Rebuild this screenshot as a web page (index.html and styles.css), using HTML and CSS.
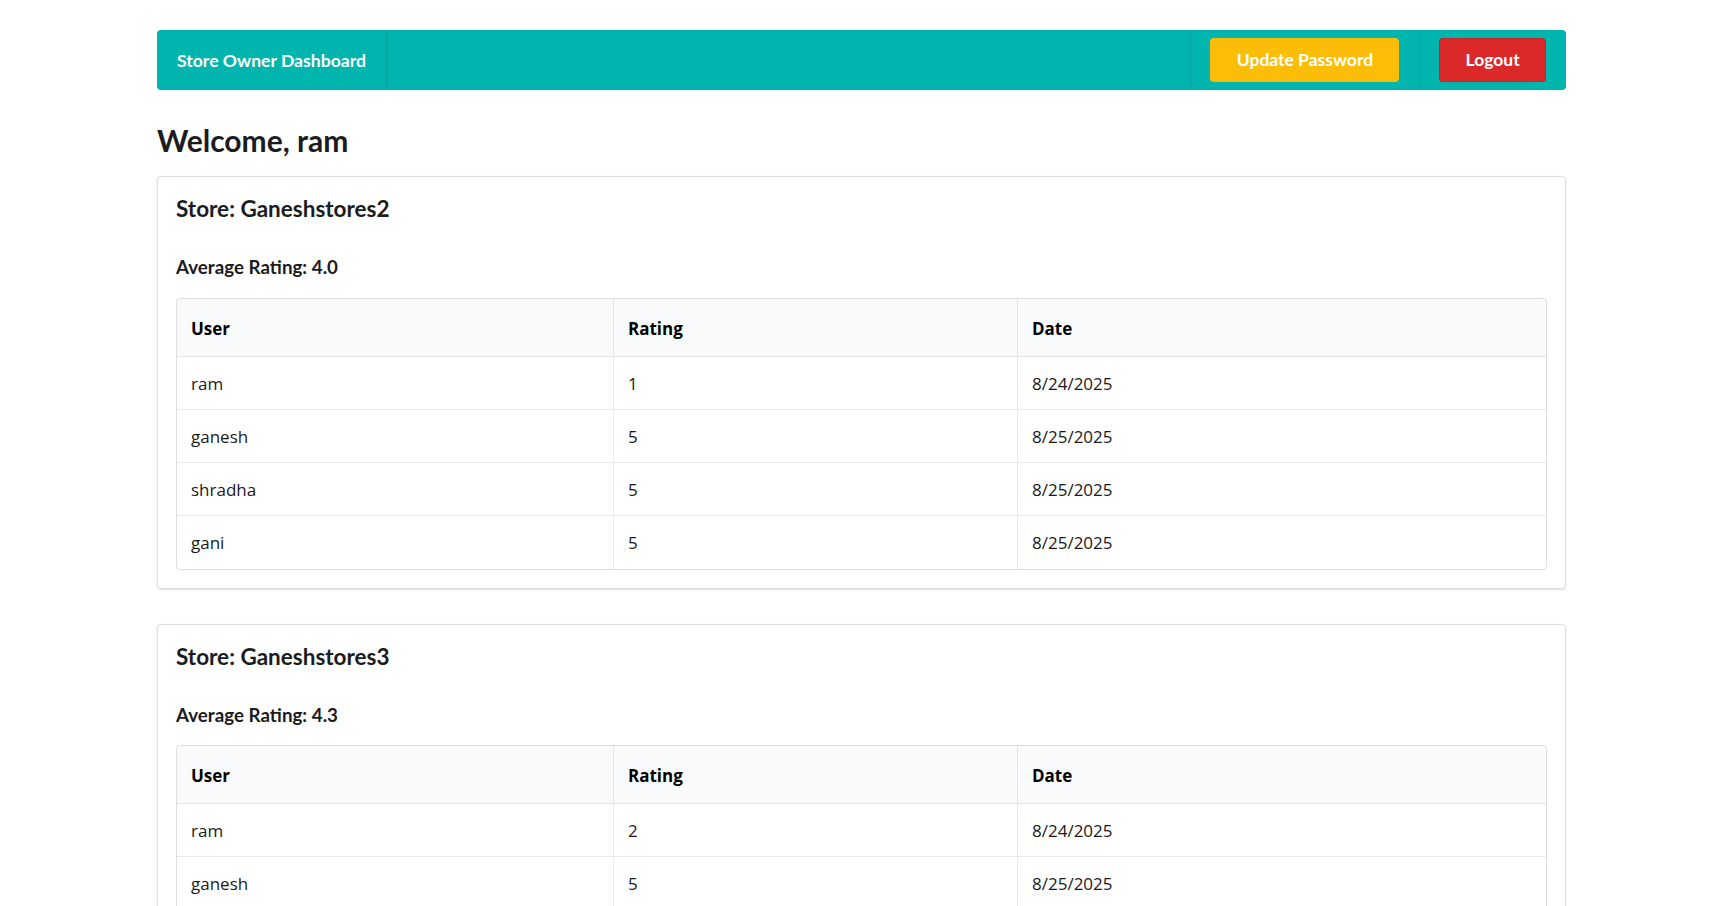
FILE: index.html
```html
<!DOCTYPE html>
<html lang="en">
<head>
<meta charset="utf-8">
<title>Store Owner Dashboard</title>
<link rel="stylesheet" href="styles.css">
</head>
<body>
<div class="page">
  <nav class="navbar">
    <div class="brand">Store Owner Dashboard</div>
    <div class="nav-right">
      <div class="nav-item"><button class="btn btn-yellow">Update Password</button></div>
      <div class="nav-item"><button class="btn btn-red">Logout</button></div>
    </div>
  </nav>

  <h1 class="welcome">Welcome, ram</h1>

  <section class="card">
    <h3 class="store-title">Store: Ganeshstores2</h3>
    <h4 class="avg">Average Rating: 4.0</h4>
    <table class="ratings">
      <colgroup><col class="c-user"><col class="c-rating"><col></colgroup>
      <thead>
        <tr><th>User</th><th>Rating</th><th>Date</th></tr>
      </thead>
      <tbody>
        <tr><td>ram</td><td>1</td><td>8/24/2025</td></tr>
        <tr><td>ganesh</td><td>5</td><td>8/25/2025</td></tr>
        <tr><td>shradha</td><td>5</td><td>8/25/2025</td></tr>
        <tr><td>gani</td><td>5</td><td>8/25/2025</td></tr>
      </tbody>
    </table>
  </section>

  <section class="card">
    <h3 class="store-title">Store: Ganeshstores3</h3>
    <h4 class="avg">Average Rating: 4.3</h4>
    <table class="ratings">
      <colgroup><col class="c-user"><col class="c-rating"><col></colgroup>
      <thead>
        <tr><th>User</th><th>Rating</th><th>Date</th></tr>
      </thead>
      <tbody>
        <tr><td>ram</td><td>2</td><td>8/24/2025</td></tr>
        <tr><td>ganesh</td><td>5</td><td>8/25/2025</td></tr>
        <tr><td>shradha</td><td>5</td><td>8/25/2025</td></tr>
      </tbody>
    </table>
  </section>
</div>
</body>
</html>
```

FILE: styles.css
```css
* { box-sizing: border-box; }

body {
  margin: 0;
  font-family: Lato, "Open Sans", sans-serif;
  color: rgba(0, 0, 0, 0.87);
  background: #ffffff;
}

.page {
  width: 1409px;
  margin-left: 157px;
  padding-top: 30px;
}

/* Navbar */
.navbar {
  display: flex;
  height: 60px;
  background: #00b5ad;
  border-radius: 4px;
}

.brand {
  display: flex;
  align-items: center;
  padding: 0 20px;
  border-right: 1px solid rgba(34, 36, 38, 0.12);
  color: #ffffff;
  font-weight: 700;
  font-size: 17.6px;
}

.nav-right {
  display: flex;
  margin-left: auto;
}

.nav-item {
  display: flex;
  align-items: center;
  padding: 0 20px 0 19px;
  border-left: 1px solid rgba(34, 36, 38, 0.12);
}

.btn {
  font-family: Lato, sans-serif;
  font-weight: 700;
  font-size: 17.5px;
  line-height: 1em;
  padding: 13.5px 26.25px;
  border: none;
  border-radius: 4px;
  color: #ffffff;
  cursor: pointer;
}

.btn-yellow { background: #fbbd08; }
.btn-red { background: #db2828; box-shadow: inset 0 0 0 1px rgba(0,0,0,0.08); }

/* Headings */
.welcome {
  margin: 32px 0 18px;
  font-size: 30px;
  line-height: 1.2;
  font-weight: 700;
  color: #1b1c1d;
}

/* Card */
.card {
  border: 1px solid rgba(34, 36, 38, 0.15);
  border-radius: 4px;
  box-shadow: 0 1px 2px 0 rgba(34, 36, 38, 0.15);
  padding: 18px 18px 18px;
  margin-bottom: 35px;
}

.store-title {
  margin: 0 0 34px;
  font-size: 22.5px;
  line-height: 1.2;
  font-weight: 700;
  color: #1b1c1d;
}

.avg {
  margin: 0 0 19px;
  font-size: 18.75px;
  line-height: 1.2;
  font-weight: 700;
  color: #1b1c1d;
}

/* Table */
.ratings {
  width: 100%;
  table-layout: fixed;
  border-collapse: separate;
  border-spacing: 0;
  border: 1px solid rgba(34, 36, 38, 0.15);
  border-radius: 4px;
  font-family: "Open Sans", "Noto Sans", sans-serif;
  font-size: 17px;
  line-height: 24px;
  color: #1a1a1a;
}

.c-user { width: 436px; }
.c-rating { width: 404px; }

.ratings th {
  text-align: left;
  font-weight: 700;
  color: #000000;
  background: #f9fafb;
  padding: 18px 14px 15px;
  border-bottom: 1px solid rgba(34, 36, 38, 0.1);
}

.ratings th:first-child { border-top-left-radius: 4px; }
.ratings th:last-child { border-top-right-radius: 4px; }

.ratings td {
  padding: 15px 14px 13.3px;
  font-weight: 400;
}

.ratings th + th,
.ratings td + td {
  border-left: 1px solid rgba(34, 36, 38, 0.1);
}

.ratings tbody tr + tr td {
  border-top: 1px solid rgba(34, 36, 38, 0.1);
}
```
